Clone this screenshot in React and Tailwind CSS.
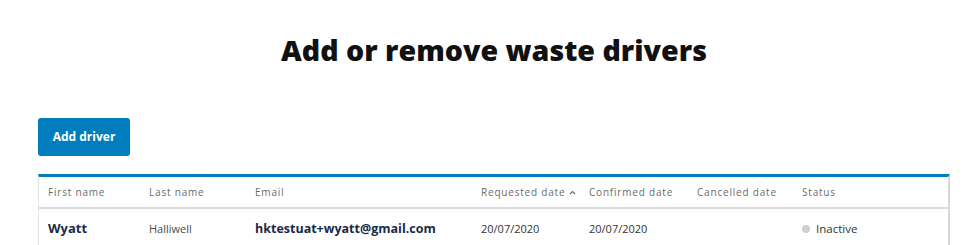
export default function App() {
  const cols = [
    { label: "First name", w: "w-[101px]" },
    { label: "Last name", w: "w-[106px]" },
    { label: "Email", w: "w-[226px]" },
    { label: "Requested date", w: "w-[108px]", sort: true },
    { label: "Confirmed date", w: "w-[108px]" },
    { label: "Cancelled date", w: "w-[105px]" },
    { label: "Status", w: "" },
  ];

  return (
    <div className="min-h-screen bg-white font-['Open_Sans',sans-serif] text-[#1a1a1a]">
      <div className="ml-[38px] w-[912px]">
        <h1 className="pt-[31px] text-center text-[28.6px] font-extrabold leading-[37px] text-[#111]">
          Add or remove waste drivers
        </h1>

        <button className="mt-[50px] h-[38px] w-[92px] rounded-[3px] bg-[#007dbc] text-[12px] font-bold text-white">
          Add driver
        </button>

        <div className="mt-[18px] border-t-[3px] border-r-2 border-l border-t-[#007dbc] border-r-[#d8d8d8] border-l-[#e2e2e2]">
          <table className="w-full table-fixed border-collapse">
            <thead>
              <tr className="h-[31px] border-b-2 border-[#d9dde3] text-left">
                {cols.map((c) => (
                  <th
                    key={c.label}
                    className={`${c.w} pl-[9px] text-[10px] font-normal tracking-[0.8px] text-[#6b6b6b]`}
                  >
                    {c.label}
                    {c.sort && (
                      <svg className="ml-[4px] inline-block align-middle" width="7" height="5" viewBox="0 0 7 5">
                        <path d="M1 4 L3.5 1.5 L6 4" stroke="#6b6b6b" strokeWidth="1.2" fill="none" />
                      </svg>
                    )}
                  </th>
                ))}
              </tr>
            </thead>
            <tbody>
              <tr className="h-[41px] text-left align-middle">
                <td className="pl-[9px] text-[13px] font-bold text-[#1b2a47]">Wyatt</td>
                <td className="pl-[9px] text-[11px] text-[#4a4a4a]">Halliwell</td>
                <td className="pl-[9px] text-[12.5px] font-bold text-[#1b2a47]">hktestuat+wyatt@gmail.com</td>
                <td className="pl-[9px] text-[11px] text-[#333]">20/07/2020</td>
                <td className="pl-[9px] text-[11px] text-[#333]">20/07/2020</td>
                <td></td>
                <td className="pl-[9px] text-[11.5px] text-[#333]">
                  <span className="mr-[6px] inline-block h-[8px] w-[8px] rounded-full bg-[#cfcfcf] align-[0px]"></span>
                  Inactive
                </td>
              </tr>
            </tbody>
          </table>
        </div>
      </div>
    </div>
  );
}
